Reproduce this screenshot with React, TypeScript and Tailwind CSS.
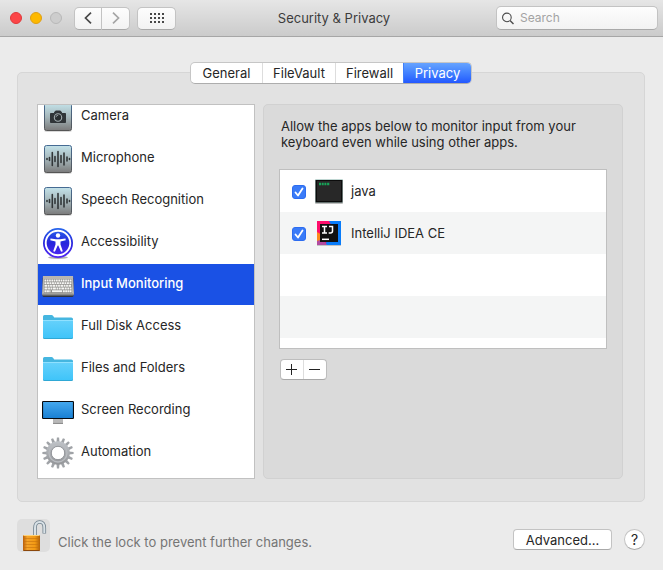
import { useId, useState, type ReactNode } from "react";

function WaveIcon({ camera = false }: { camera?: boolean }) {
  const id = useId();
  return (
    <svg width="32" height="32" viewBox="0 0 32 32" aria-hidden="true">
      <defs>
        <linearGradient id={id} x1="0" y1="0" x2="0" y2="1">
          <stop offset="0" stopColor="#c3e2e9" />
          <stop offset="0.5" stopColor="#a5b6ba" />
          <stop offset="1" stopColor="#7b7b7b" />
        </linearGradient>
        <linearGradient id={id + "b"} x1="0" y1="0" x2="0" y2="1">
          <stop offset="0" stopColor="#466b93" />
          <stop offset="1" stopColor="#555555" />
        </linearGradient>
      </defs>
      <rect x="2" y="3" width="28" height="28" rx="2.5" fill="#000" opacity="0.15" />
      <rect x="2.5" y="2.5" width="27" height="27" rx="2" fill={`url(#${id})`} stroke={`url(#${id}b)`} />
      {camera ? (
        <g>
          <path d="M8.500 12.500h3.500l1.500-2.500h5l1.500 2.500h3.500v9h-15z" fill="#303538" stroke="#303538" strokeLinejoin="round" />
          <circle cx="16" cy="16.500" r="3.700" fill="#292e30" stroke="#a3adb0" strokeWidth="1.1" />
          <path d="M13.900 16.300a2.200 2.200 0 0 1 2.300-2" stroke="#8c9699" fill="none" />
        </g>
      ) : (
        <path
          d="M5 15.500v1M7.500 14.500v3M10.300 9.500v13M13 13.500v5M16 8.500v15M19 12.500v7M22 10v12M25 14v4M27.500 15.500v1"
          stroke="#313638"
          strokeWidth="1.600"
          strokeLinecap="round"
        />
      )}
    </svg>
  );
}

function AccessibilityIcon() {
  const id = useId();
  return (
    <svg width="32" height="32" viewBox="0 0 32 32" aria-hidden="true">
      <defs>
        <linearGradient id={id} x1="0" y1="0" x2="0" y2="1">
          <stop offset="0" stopColor="#2767ec" />
          <stop offset="0.5" stopColor="#2725dc" />
          <stop offset="1" stopColor="#5428f5" />
        </linearGradient>
      </defs>
      <ellipse cx="16" cy="30.500" rx="10" ry="1.500" fill="#000" opacity="0.3" />
      <circle cx="16" cy="16" r="15" fill={`url(#${id})`} />
      <circle cx="16" cy="16" r="12.300" fill="none" stroke="#fff" strokeWidth="1.900" />
      <circle cx="16" cy="8.500" r="2.200" fill="#fff" />
      <path
        d="M8.500 11.600l5.500.7h4l5.500-.7.2 1.700-5.200 1.200v3l2.300 6.700-1.700.6-2.800-6.200h-.6l-2.800 6.200-1.700-.6 2.300-6.700v-3l-5.200-1.200z"
        fill="#fff"
      />
    </svg>
  );
}

function KeyboardIcon() {
  return (
    <svg width="32" height="32" viewBox="0 0 32 32" aria-hidden="true">
      <rect x="0.5" y="8" width="31" height="20" rx="1.5" fill="#2f3440" />
      <path d="M1 7h30l1 18.5H0z" fill="#b9b6b0" />
      <rect x="0" y="24.500" width="32" height="2" rx="1" fill="#8b8b89" />
      <rect x="2" y="10" width="28" height="14" fill="#8f8e8b" />
      <g stroke="#f6f6f4" strokeWidth="1.9">
        <path d="M2.5 11.500h27" strokeDasharray="1.7 0.6" />
        <path d="M2.5 14.100h27" strokeDasharray="1.9 0.6" />
        <path d="M2.5 16.800h27" strokeDasharray="2.6 0.6 1.8 0.6 1.8 0.6" />
        <path d="M2.5 19.500h27" strokeDasharray="3 0.6 1.8 0.6 1.8 0.6" />
        <path d="M2.5 22.200h6M20.800 22.200h8.700" strokeDasharray="2 0.4" />
        <path d="M10 22.200h10" />
      </g>
    </svg>
  );
}

function FolderIcon() {
  const id = useId();
  return (
    <svg width="32" height="32" viewBox="0 0 32 32" aria-hidden="true">
      <defs>
        <linearGradient id={id} x1="0" y1="0" x2="0" y2="1">
          <stop offset="0" stopColor="#66d1fb" />
          <stop offset="1" stopColor="#3fc4f9" />
        </linearGradient>
      </defs>
      <path d="M1 5.500Q1 4 2.500 4h7q1 0 1.700 1l1 1.400h17q1.800 0 1.800 1.600v19H1z" fill="#45b6e0" />
      <path d="M1 9h30v17.5q0 1.5-1.5 1.5h-27Q1 28 1 26.5z" fill="#2a9fc9" />
      <path d="M1 9h30v16.700q0 1.500-1.500 1.500h-27Q1 27.200 1 25.700z" fill={`url(#${id})`} />
      <path d="M1 9.500h30" stroke="#90e1ff" />
    </svg>
  );
}

function DisplayIcon() {
  const id = useId();
  return (
    <svg width="32" height="32" viewBox="0 0 32 32" aria-hidden="true">
      <defs>
        <linearGradient id={id} x1="0" y1="0" x2="0" y2="1">
          <stop offset="0" stopColor="#46a9ef" />
          <stop offset="1" stopColor="#187fd3" />
        </linearGradient>
      </defs>
      <rect x="11" y="24" width="10" height="3.500" fill="#b8b8b8" />
      <rect x="11" y="27.500" width="10" height="1.500" fill="#8e8e8e" />
      <rect x="0.500" y="6.500" width="31" height="17" rx="0.800" fill={`url(#${id})`} stroke="#080b10" strokeWidth="1.200" />
    </svg>
  );
}

function GearIcon() {
  const id = useId();
  const teeth = Array.from({ length: 16 }, (_, i) => i * 22.5);
  return (
    <svg width="32" height="32" viewBox="0 0 32 32" aria-hidden="true">
      <defs>
        <linearGradient id={id} x1="0" y1="0" x2="0" y2="1">
          <stop offset="0" stopColor="#c0c4c9" />
          <stop offset="1" stopColor="#939598" />
        </linearGradient>
      </defs>
      <g fill={`url(#${id})`}>
        {teeth.map((a) => (
          <path key={a} d="M14.500 5l.4-4.600h2.200l.4 4.600z" fill="#a0a3a7" transform={`rotate(${a} 16 16)`} />
        ))}
        <path
          fillRule="evenodd"
          d="M16 4.200a11.800 11.800 0 1 0 0 23.600a11.800 11.800 0 1 0 0-23.600zM16 9.400a6.600 6.600 0 1 1 0 13.200a6.600 6.600 0 1 1 0-13.200z"
        />
      </g>
      <circle cx="16" cy="16" r="9" fill="none" stroke="#b9bcc0" strokeWidth="1.300" />
      <circle cx="16" cy="16" r="6.700" fill="none" stroke="#85888d" strokeWidth="0.800" />
    </svg>
  );
}

function TerminalIcon() {
  return (
    <svg width="28" height="28" viewBox="0 0 28 28" aria-hidden="true">
      <rect x="0" y="3" width="28" height="24" rx="1" fill="#000" opacity="0.25" />
      <rect x="0" y="2" width="28" height="24" rx="1" fill="#bfd6d2" />
      <rect x="0.500" y="3" width="27" height="22.500" fill="#0c0c0c" />
      <rect x="2" y="4" width="24" height="20" fill="#282828" />
      <path d="M4 7h11" stroke="#17a458" strokeWidth="2.500" strokeDasharray="2 0.700" />
    </svg>
  );
}

function IntelliJIcon() {
  return (
    <svg width="28" height="28" viewBox="0 0 28 28" aria-hidden="true">
      <rect x="2" y="3" width="24" height="24" fill="#000" opacity="0.200" />
      <rect x="2" y="2" width="24" height="24" fill="#087cfa" />
      <path d="M2 2h12l4 7-8 17H2z" fill="#fe0d6b" />
      <path d="M2 13l5 3v6l-5 0z" fill="#fc8a1b" />
      <path d="M2 22l6-2 4 6H2z" fill="#b24ba0" />
      <rect x="5" y="5" width="18" height="18" fill="#101010" />
      <path d="M7 7.500h5M9.500 7.500v6.500M7 14h5M14 7.500h3.500v4.500q0 2-2 2h-1.800" fill="none" stroke="#fff" strokeWidth="1.500" />
      <path d="M7 20.300h7" stroke="#fff" strokeWidth="1.500" />
    </svg>
  );
}

function LockIcon() {
  const id = useId();
  return (
    <svg width="33" height="33" viewBox="0 0 33 33" aria-hidden="true">
      <defs>
        <linearGradient id={id} x1="0" y1="0" x2="1" y2="0">
          <stop offset="0" stopColor="#b85d0b" />
          <stop offset="0.250" stopColor="#f5a42a" />
          <stop offset="0.700" stopColor="#f39a13" />
          <stop offset="1" stopColor="#b0610a" />
        </linearGradient>
      </defs>
      <path d="M18 17V9q0-6 4.700-6T27.300 9v5.500" fill="none" stroke="#72828e" strokeWidth="3.600" />
      <path d="M18 17V9q0-6 4.700-6T27.300 9v5" fill="none" stroke="#d8e1e6" strokeWidth="2" />
      <rect x="6" y="16" width="17" height="16" rx="1" fill={`url(#${id})`} />
      <path d="M6.500 19.500h16M6.500 22.500h16M6.500 25.500h16M6.500 28.500h16" stroke="#c4700c" strokeWidth="0.800" opacity="0.700" />
      <path d="M6.500 16.500h16" stroke="#ffd277" />
      <path d="M6.500 31.500h16" stroke="#8b480c" />
    </svg>
  );
}

const categories: { name: string; icon: ReactNode }[] = [
  { name: "Camera", icon: <WaveIcon camera /> },
  { name: "Microphone", icon: <WaveIcon /> },
  { name: "Speech Recognition", icon: <WaveIcon /> },
  { name: "Accessibility", icon: <AccessibilityIcon /> },
  { name: "Input Monitoring", icon: <KeyboardIcon /> },
  { name: "Full Disk Access", icon: <FolderIcon /> },
  { name: "Files and Folders", icon: <FolderIcon /> },
  { name: "Screen Recording", icon: <DisplayIcon /> },
  { name: "Automation", icon: <GearIcon /> },
];

const tabs = [
  { name: "General", width: "w-[71px]" },
  { name: "FileVault", width: "w-[73px]" },
  { name: "Firewall", width: "w-[68px]" },
  { name: "Privacy", width: "w-[68px]" },
];

function AppRow({ name, icon }: { name: string; icon: ReactNode }) {
  const id = useId();
  const [checked, setChecked] = useState(true);
  return (
    <li className="flex h-[42px] items-center pl-3 even:bg-[#f4f5f5]">
      <span className="mt-0.5 grid">
        <input
          id={id}
          type="checkbox"
          checked={checked}
          onChange={(e) => setChecked(e.target.checked)}
          className="peer col-start-1 row-start-1 size-3.5 appearance-none rounded-[3px] border border-[#b5b5b5] bg-white checked:border-[#2c6cf0] checked:bg-[#3a7bf8]"
        />
        <svg
          className="pointer-events-none invisible col-start-1 row-start-1 peer-checked:visible"
          width="14"
          height="14"
          viewBox="0 0 14 14"
          fill="none"
          aria-hidden="true"
        >
          <path d="M3.500 7.500l2.500 3 4.500-7" stroke="#fff" strokeWidth="1.800" strokeLinecap="round" strokeLinejoin="round" />
        </svg>
      </span>
      <label htmlFor={id} className="flex items-center gap-2 pl-[9px]">
        {icon}
        {name}
      </label>
    </li>
  );
}

export default function App() {
  const [category, setCategory] = useState("Input Monitoring");
  const [tab, setTab] = useState("Privacy");
  const toolButton =
    "flex h-[23px] items-center justify-center border border-[#c3c3c3] border-b-[#a9a9a9] bg-linear-to-b from-[#fdfdfd] to-[#f2f2f2]";

  return (
    <div className="min-h-screen bg-[#ebebeb] font-['Inter','Liberation_Sans',sans-serif] text-[13px] leading-4 text-[#262626]">
      <header className="grid h-[37px] grid-cols-[1fr_auto_1fr] items-center border-b border-[#a6a6a6] bg-linear-to-b from-[#e6e6e6] to-[#cbcbcb] pr-[5px] pl-2.5">
        <div className="flex items-center">
          <div className="flex gap-2">
            <button aria-label="Close" className="size-3 rounded-full border border-[#e0383a] bg-[#fc4648]" />
            <button aria-label="Minimize" className="size-3 rounded-full border border-[#df9f14] bg-[#fdb900]" />
            <button aria-label="Zoom" disabled className="size-3 rounded-full border border-[#b8b8b8] bg-[#cdcdcd]" />
          </div>
          <div className="ml-3 flex">
            <button aria-label="Back" className={`${toolButton} w-7 rounded-l-[5px]`}>
              <svg width="8" height="12" viewBox="0 0 8 12" fill="none" stroke="#484848" strokeWidth="1.700">
                <path d="M7 .7L1.500 6 7 11.300" />
              </svg>
            </button>
            <button aria-label="Forward" disabled className={`${toolButton} w-7 rounded-r-[5px] border-l-0`}>
              <svg width="8" height="12" viewBox="0 0 8 12" fill="none" stroke="#a5a5a5" strokeWidth="1.700">
                <path d="M1 .7L6.500 6 1 11.300" />
              </svg>
            </button>
          </div>
          <button aria-label="Show All" className={`${toolButton} ml-[7px] w-[39px] rounded-[5px]`}>
            <svg width="14" height="10" viewBox="0 0 14 10" stroke="#484848" strokeWidth="2">
              <path d="M0 1h14M0 5h14M0 9h14" strokeDasharray="2 2" />
            </svg>
          </button>
        </div>
        <h1 className="text-[#3c3c3c]">Security &amp; Privacy</h1>
        <label className="flex h-6 w-[162px] items-center justify-self-end rounded-[5px] border border-[#c3c3c3] border-b-[#a9a9a9] bg-linear-to-b from-[#fdfdfd] to-[#f2f2f2] pl-[5px]">
          <svg width="13" height="13" viewBox="0 0 13 13" fill="none" stroke="#4c4c4c" strokeWidth="1.200" aria-hidden="true">
            <circle cx="5.300" cy="5.300" r="4.700" />
            <path d="M8.700 8.700l3.800 3.800" strokeWidth="1.500" />
          </svg>
          <input
            type="search"
            aria-label="Search"
            placeholder="Search"
            className="w-full bg-transparent pl-1.5 text-xs outline-none placeholder:text-[#a3a3a3]"
          />
        </label>
      </header>

      <main className="pt-[25px] pr-[18px] pl-[17px]">
        <div className="relative z-10 -mb-3 flex justify-center">
          <div role="tablist" className="flex h-[22px] overflow-hidden rounded-[5px] border border-[#c6c6c6] border-b-[#adadad] bg-white">
            {tabs.map((t) => (
              <button
                key={t.name}
                role="tab"
                aria-selected={tab === t.name}
                onClick={() => setTab(t.name)}
                className={`${t.width} border-l border-[#dddddd] first:border-l-0 aria-selected:border-[#3f7ffb] aria-selected:bg-linear-to-b aria-selected:from-[#66a3ff] aria-selected:to-[#2457ff] aria-selected:text-white`}
              >
                {t.name}
              </button>
            ))}
          </div>
        </div>

        <section className="flex gap-2 rounded-[5px] border border-[#d6d6d6] bg-[#e2e2e2] pt-[31px] pr-[21px] pb-[22px] pl-[19px]">
          <ul className="flex h-[375px] w-[218px] shrink-0 flex-col justify-end overflow-hidden border border-[#c1c1c1] bg-white pb-1">
            {categories.map((c) => (
              <li key={c.name} className="h-[42px] shrink-0">
                <button
                  aria-pressed={category === c.name}
                  onClick={() => setCategory(c.name)}
                  className="flex h-[41px] w-full items-center gap-[7px] pb-1 pl-1 text-left aria-pressed:bg-[#1a51e5] aria-pressed:font-medium aria-pressed:text-white"
                >
                  <span className="pt-1">{c.icon}</span>
                  {c.name}
                </button>
              </li>
            ))}
          </ul>

          <div className="min-w-0 flex-1 rounded-[5px] border border-[#d1d1d1] bg-[#dadada] px-[15px] pt-[13px]">
            <p className="max-w-[310px] pl-0.5">
              Allow the apps below to monitor input from your keyboard even while using other apps.
            </p>
            <ul className="mt-[19px] h-[180px] overflow-hidden border border-[#bfbfbf] bg-white">
              <AppRow name="java" icon={<TerminalIcon />} />
              <AppRow name="IntelliJ IDEA CE" icon={<IntelliJIcon />} />
              <li className="h-[42px]" />
              <li className="h-[42px] bg-[#f4f5f5]" />
            </ul>
            <div className="mt-2.5 ml-px flex h-[21px] w-[47px] overflow-hidden rounded-[4px] border border-[#bdbdbd] border-b-[#a8a8a8] bg-white">
              <button aria-label="Add app" className="flex w-[23px] items-center justify-center border-r border-[#dddddd]">
                <svg width="12" height="11" viewBox="0 0 12 11" stroke="#222">
                  <path d="M0 5.500h11M5.500 0v11" />
                </svg>
              </button>
              <button aria-label="Remove app" className="flex flex-1 items-center justify-center">
                <svg width="12" height="11" viewBox="0 0 12 11" stroke="#222">
                  <path d="M0 5.500h11" />
                </svg>
              </button>
            </div>
          </div>
        </section>
      </main>

      <footer className="flex items-center pt-[17px] pr-[18px] pl-[17px]">
        <button aria-label="Lock" className="size-[33px] rounded-[5px] bg-[#dedede]">
          <LockIcon />
        </button>
        <p className="flex-1 pt-3 pl-2 text-[#757575]">Click the lock to prevent further changes.</p>
        <button className="mt-2 h-[21px] w-[99px] rounded-[4px] border border-[#c3c3c3] border-b-[#a9a9a9] bg-white">
          Advanced...
        </button>
        <button
          aria-label="Help"
          className="mt-2 ml-3 size-[21px] rounded-full border border-[#c3c3c3] border-b-[#a9a9a9] bg-white text-sm leading-4"
        >
          ?
        </button>
      </footer>
    </div>
  );
}
